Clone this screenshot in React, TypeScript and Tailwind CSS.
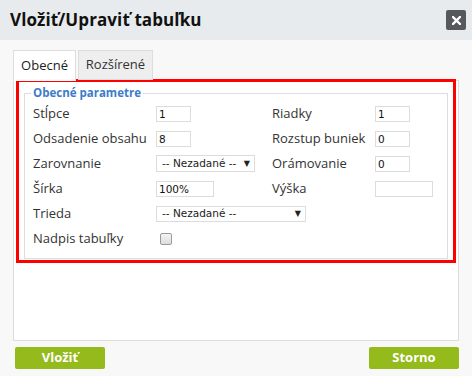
import React from 'react'

const font = { fontFamily: '"Open Sans", "DejaVu Sans", sans-serif' }
const small = { fontFamily: '"DejaVu Sans", Verdana, sans-serif' }

function TextInput({ value, w }: { value: string; w: string }) {
  return (
    <div
      className={`${w} h-[16px] border border-[#dcdcdc] bg-white pl-[2px] text-[10.5px] leading-[14px] text-[#111]`}
      style={small}
    >
      {value}
    </div>
  )
}

function Select({ w, h }: { w: string; h: string }) {
  return (
    <div
      className={`${w} ${h} border border-[#dcdcdc] bg-white flex items-center justify-between pl-[5px] pr-[4px] text-[10.5px] text-[#222]`}
      style={small}
    >
      <span>-- Nezadané --</span>
      <span className="text-[8px] leading-none">▼</span>
    </div>
  )
}

function Label({ children, w, className = '' }: { children: React.ReactNode; w: string; className?: string }) {
  return <div className={`${w} shrink-0 text-[13px] text-[#333] ${className}`}>{children}</div>
}

export default function App() {
  return (
    <div className="w-[472px] h-[376px] bg-[#f8f8f8] flex flex-col" style={font}>
      <div className="h-[40px] bg-[#e8ebee] flex items-center justify-between pl-[10px] pr-[6px]">
        <h1 className="text-[17px] font-bold text-[#111] tracking-[0.1px]">Vložiť/Upraviť tabuľku</h1>
        <button className="w-[20px] h-[20px] bg-[#56595c] rounded-[2px] flex items-center justify-center">
          <svg width="9" height="9" viewBox="0 0 9 9">
            <path d="M1 1 L8 8 M8 1 L1 8" stroke="#fff" strokeWidth="2.4" strokeLinecap="square" />
          </svg>
        </button>
      </div>

      <div className="px-[13px] pt-[10px]">
        <div className="flex gap-[2px]">
          <div className="w-[63px] h-[31px] -mb-[1px] border border-[#ddd] border-b-white bg-white flex items-center justify-center text-[13px] text-[#222]">
            Obecné
          </div>
          <div className="w-[75px] h-[30px] border border-[#ddd] bg-[#eeeeee] flex items-center justify-center text-[13px] text-[#333]">
            Rozšírené
          </div>
        </div>

        <div className="h-[261px] border border-[#dcdcdc] bg-white px-[2px]">
          <div className="-mt-[2px] border-[3px] border-[#ff0000] pl-[5px] pr-[5px] pt-[3px] pb-[1px]">
            <fieldset className="border border-[#ddd] pl-[8px] pr-[8px] pb-[7px]">
              <legend className="ml-[-2px] px-[2px] text-[11.5px] font-bold text-[#3d7cc9] leading-[16px]">
                Obecné parametre
              </legend>

              <div className="flex items-center h-[25px]">
                <Label w="w-[123px]">Stĺpce</Label>
                <div className="w-[116px] shrink-0"><TextInput value="1" w="w-[35px]" /></div>
                <Label w="w-[103px]">Riadky</Label>
                <TextInput value="1" w="w-[35px]" />
              </div>
              <div className="flex items-center h-[25px]">
                <Label w="w-[123px]">Odsadenie obsahu</Label>
                <div className="w-[116px] shrink-0"><TextInput value="8" w="w-[35px]" /></div>
                <Label w="w-[103px]">Rozstup buniek</Label>
                <TextInput value="0" w="w-[35px]" />
              </div>
              <div className="flex items-center h-[25px]">
                <Label w="w-[123px]">Zarovnanie</Label>
                <div className="w-[116px] shrink-0"><Select w="w-[99px]" h="h-[17px]" /></div>
                <Label w="w-[103px]">Orámovanie</Label>
                <TextInput value="0" w="w-[35px]" />
              </div>
              <div className="flex items-center h-[25px]">
                <Label w="w-[123px]">Šírka</Label>
                <div className="w-[116px] shrink-0"><TextInput value="100%" w="w-[58px]" /></div>
                <Label w="w-[103px]" className="text-[#3b3a6e]">Výška</Label>
                <TextInput value="" w="w-[58px]" />
              </div>
              <div className="flex items-center h-[25px]">
                <Label w="w-[123px]">Trieda</Label>
                <Select w="w-[150px]" h="h-[16px]" />
              </div>
              <div className="flex items-center h-[25px]">
                <Label w="w-[123px]">Nadpis tabuľky</Label>
                <div className="ml-[4px] w-[12px] h-[12px] rounded-[2px] border border-[#9a9a9a] bg-gradient-to-b from-[#f4f4f4] to-[#dedede]" />
              </div>
            </fieldset>
          </div>
        </div>
      </div>

      <div className="flex justify-between px-[15px] mt-[6px]">
        <button className="w-[90px] h-[22px] rounded-[2px] bg-[#94ba1b] text-white text-[13px] font-bold">Vložiť</button>
        <button className="w-[90px] h-[22px] rounded-[2px] bg-[#94ba1b] text-white text-[13px] font-bold mr-[-2px]">Storno</button>
      </div>
    </div>
  )
}
